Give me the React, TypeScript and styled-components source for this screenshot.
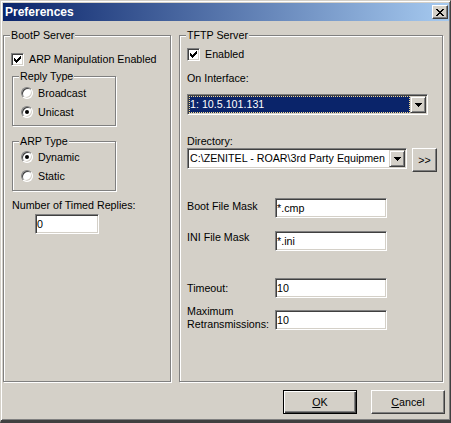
import React from "react";
import styled, { createGlobalStyle, css } from "styled-components";

const GlobalStyle = createGlobalStyle`
  html, body {
    margin: 0;
    padding: 0;
    background: #d4d0c8;
  }
  body {
    font-family: "Liberation Sans", Arial, sans-serif;
    font-size: 10.7px;
    color: #000;
  }
`;

// classic win2000 bevels
const sunken = css`
  border: 1px solid;
  border-color: #808080 #fff #fff #808080;
  box-shadow: inset 1px 1px #404040, inset -1px -1px #d4d0c8;
`;

const raised = css`
  border: 1px solid;
  border-color: #fff #404040 #404040 #fff;
  box-shadow: inset -1px -1px #808080;
`;

const Window = styled.div`
  box-sizing: border-box;
  width: 451px;
  height: 423px;
  display: flex;
  flex-direction: column;
  padding: 2px 1px 0 2px;
  background: #d4d0c8;
  border: 1px solid;
  border-bottom-width: 3px;
  border-color: #d4d0c8 #404040 #404040 #d4d0c8;
  box-shadow: inset 1px 1px #fff, inset -1px -1px #808080;
`;

const TitleBar = styled.div`
  height: 18px;
  display: flex;
  align-items: center;
  justify-content: space-between;
  padding: 0 1px 0 2px;
  background: linear-gradient(to right, #0a246a, #a6caf0);
`;

const Title = styled.span`
  color: #fff;
  font-weight: bold;
  font-size: 12px;
  line-height: 18px;
`;

const CloseButton = styled.div`
  box-sizing: border-box;
  width: 16px;
  height: 14px;
  display: flex;
  align-items: center;
  justify-content: center;
  background: #d4d0c8;
  ${raised}
`;

const Content = styled.div`
  flex: 1;
  display: flex;
  flex-direction: column;
  padding-top: 8px;
`;

const Columns = styled.div`
  display: flex;
  gap: 8px;
`;

const Group = styled.fieldset<{ $w: number; $h: number }>`
  box-sizing: border-box;
  width: ${(p) => p.$w}px;
  height: ${(p) => p.$h}px;
  min-width: 0;
  margin: 0;
  padding: 0;
  border: 1px solid #808080;
  box-shadow: 1px 1px 0 #fff, inset 1px 1px 0 #fff;
`;

const Caption = styled.legend`
  margin-left: 6px;
  padding: 0 1px;
  height: 13px;
  line-height: 13px;
  background: #d4d0c8;
`;

const GroupBody = styled.div<{ $pad: string }>`
  display: flex;
  flex-direction: column;
  align-items: flex-start;
  padding: ${(p) => p.$pad};
`;

const SubGroup = styled(Group)<{ $mt: number }>`
  margin-top: ${(p) => p.$mt}px;
  margin-left: 1px;
`;

const Option = styled.label<{ $h: number; $mt?: number }>`
  display: flex;
  align-items: center;
  gap: 5px;
  height: ${(p) => p.$h}px;
  line-height: 13px;
  margin-top: ${(p) => p.$mt ?? 0}px;
  white-space: nowrap;
`;

const CheckBox = styled.span`
  box-sizing: border-box;
  width: 13px;
  height: 13px;
  flex: none;
  display: flex;
  background: #fff;
  ${sunken}
`;

const RadioDot = styled.span<{ $on?: boolean }>`
  box-sizing: border-box;
  width: 12px;
  height: 12px;
  flex: none;
  border-radius: 50%;
  display: flex;
  align-items: center;
  justify-content: center;
  background: #fff;
  ${sunken}

  &::after {
    content: "";
    display: ${(p) => (p.$on ? "block" : "none")};
    width: 4px;
    height: 4px;
    border-radius: 50%;
    background: #000;
  }
`;

const Text = styled.div<{ $mt: number; $ml?: number }>`
  line-height: 13px;
  margin-top: ${(p) => p.$mt}px;
  margin-left: ${(p) => p.$ml ?? 0}px;
  white-space: nowrap;
`;

const TextBox = styled.input<{ $w: number; $mt?: number; $ml?: number }>`
  box-sizing: border-box;
  width: ${(p) => p.$w}px;
  height: 20px;
  margin: ${(p) => p.$mt ?? 0}px 0 0 ${(p) => p.$ml ?? 0}px;
  padding: 0 1px;
  font: inherit;
  color: #000;
  background: #fff;
  outline: none;
  ${sunken}
`;

const Combo = styled.div<{ $w: number; $mt?: number }>`
  box-sizing: border-box;
  width: ${(p) => p.$w}px;
  height: 21px;
  margin-top: ${(p) => p.$mt ?? 0}px;
  display: flex;
  padding: 1px;
  background: #fff;
  ${sunken}
`;

const ComboField = styled.div<{ $focused?: boolean }>`
  flex: 1;
  min-width: 0;
  overflow: hidden;
  white-space: nowrap;
  padding-left: 1px;
  line-height: 17px;
  ${(p) =>
    p.$focused &&
    css`
      background: #0a246a;
      color: #fff;
      outline: 1px dotted #f2d88e;
      outline-offset: -1px;
    `}
`;

const DropButton = styled.div`
  box-sizing: border-box;
  width: 16px;
  height: 17px;
  flex: none;
  display: flex;
  align-items: center;
  justify-content: center;
  background: #d4d0c8;
  border: 1px solid;
  border-color: #d4d0c8 #404040 #404040 #d4d0c8;
  box-shadow: inset 1px 1px #fff, inset -1px -1px #808080;
`;

const Row = styled.div<{ $mt?: number; $gap?: number }>`
  display: flex;
  align-items: flex-start;
  gap: ${(p) => p.$gap ?? 0}px;
  margin-top: ${(p) => p.$mt ?? 0}px;
`;

const FieldLabel = styled.span<{ $mt?: number }>`
  width: 88px;
  flex: none;
  line-height: 13px;
  margin-top: ${(p) => p.$mt ?? 0}px;
`;

const Button = styled.button<{ $w: number; $h: number; $default?: boolean }>`
  box-sizing: border-box;
  width: ${(p) => p.$w}px;
  height: ${(p) => p.$h}px;
  padding: 0;
  font: inherit;
  color: #000;
  background: #d4d0c8;
  ${raised}
  ${(p) =>
    p.$default &&
    css`
      border: 1px solid #000;
      box-shadow: inset 1px 1px #fff, inset -1px -1px #404040, inset -2px -2px #808080;
    `}
`;

const ButtonBar = styled.div`
  display: flex;
  justify-content: flex-end;
  gap: 14px;
  margin-top: 8px;
  padding-right: 4px;
`;

const Check = () => (
  <svg width="11" height="11" viewBox="0 0 11 11" shapeRendering="crispEdges">
    <path
      fill="#000"
      d="M8 2h1v1h-1z M7 3h2v1h-2z M2 4h1v1h-1z M6 4h3v1h-3z M2 5h2v1h-2z M5 5h3v1h-3z M2 6h5v1h-5z M3 7h3v1h-3z M4 8h1v1h-1z"
    />
  </svg>
);

const Arrow = () => (
  <svg width="7" height="4" viewBox="0 0 7 4" shapeRendering="crispEdges">
    <path fill="#000" d="M0 0h7v1h-1v1h-1v1h-1v1h-1v-1h-1v-1h-1v-1h-1z" />
  </svg>
);

const CloseGlyph = () => (
  <svg width="8" height="7" viewBox="0 0 8 7" shapeRendering="crispEdges">
    <path
      fill="#000"
      d="M0 0h2v1h-2z M6 0h2v1h-2z M1 1h2v1h-2z M5 1h2v1h-2z M2 2h4v1h-4z M3 3h2v1h-2z M2 4h4v1h-4z M1 5h2v1h-2z M5 5h2v1h-2z M0 6h2v1h-2z M6 6h2v1h-2z"
    />
  </svg>
);

const App = () => {
  return (
    <>
      <GlobalStyle />
      <Window>
        <TitleBar>
          <Title>Preferences</Title>
          <CloseButton>
            <CloseGlyph />
          </CloseButton>
        </TitleBar>
        <Content>
          <Columns>
            <Group $w={168} $h={353}>
              <Caption>BootP Server</Caption>
              <GroupBody $pad="11px 0 0 7px">
                <Option $h={13}>
                  <CheckBox>
                    <Check />
                  </CheckBox>
                  ARP Manipulation Enabled
                </Option>
                <SubGroup $w={104} $h={56} $mt={4}>
                  <Caption>Reply Type</Caption>
                  <GroupBody $pad="4px 0 0 8px">
                    <Option $h={12}>
                      <RadioDot />
                      Broadcast
                    </Option>
                    <Option $h={12} $mt={7}>
                      <RadioDot $on />
                      Unicast
                    </Option>
                  </GroupBody>
                </SubGroup>
                <SubGroup $w={104} $h={56} $mt={9}>
                  <Caption>ARP Type</Caption>
                  <GroupBody $pad="3px 0 0 8px">
                    <Option $h={12}>
                      <RadioDot $on />
                      Dynamic
                    </Option>
                    <Option $h={12} $mt={7}>
                      <RadioDot />
                      Static
                    </Option>
                  </GroupBody>
                </SubGroup>
                <Text $mt={8} $ml={1}>
                  Number of Timed Replies:
                </Text>
                <TextBox $w={64} $mt={2} $ml={24} defaultValue="0" />
              </GroupBody>
            </Group>

            <Group $w={264} $h={353}>
              <Caption>TFTP Server</Caption>
              <GroupBody $pad="6px 0 0 7px">
                <Option $h={13}>
                  <CheckBox>
                    <Check />
                  </CheckBox>
                  Enabled
                </Option>
                <Text $mt={11}>On Interface:</Text>
                <Combo $w={241} $mt={9}>
                  <ComboField $focused>1: 10.5.101.131</ComboField>
                  <DropButton>
                    <Arrow />
                  </DropButton>
                </Combo>
                <Text $mt={20}>Directory:</Text>
                <Row $gap={5}>
                  <Combo $w={220}>
                    <ComboField>{"C:\\ZENITEL - ROAR\\3rd Party Equipmen"}</ComboField>
                    <DropButton>
                      <Arrow />
                    </DropButton>
                  </Combo>
                  <Button $w={25} $h={24}>
                    &gt;&gt;
                  </Button>
                </Row>
                <Row $mt={26}>
                  <FieldLabel $mt={2}>Boot File Mask</FieldLabel>
                  <TextBox $w={112} defaultValue="*.cmp" />
                </Row>
                <Row $mt={13}>
                  <FieldLabel>INI File Mask</FieldLabel>
                  <TextBox $w={112} defaultValue="*.ini" />
                </Row>
                <Row $mt={27}>
                  <FieldLabel $mt={4}>Timeout:</FieldLabel>
                  <TextBox $w={112} defaultValue="10" />
                </Row>
                <Row $mt={7}>
                  <FieldLabel>
                    Maximum
                    <br />
                    Retransmissions:
                  </FieldLabel>
                  <TextBox $w={112} $mt={5} defaultValue="10" />
                </Row>
              </GroupBody>
            </Group>
          </Columns>
          <ButtonBar>
            <Button $w={74} $h={24} $default>
              <u>O</u>K
            </Button>
            <Button $w={74} $h={24}>
              <u>C</u>ancel
            </Button>
          </ButtonBar>
        </Content>
      </Window>
    </>
  );
};

export default App;
